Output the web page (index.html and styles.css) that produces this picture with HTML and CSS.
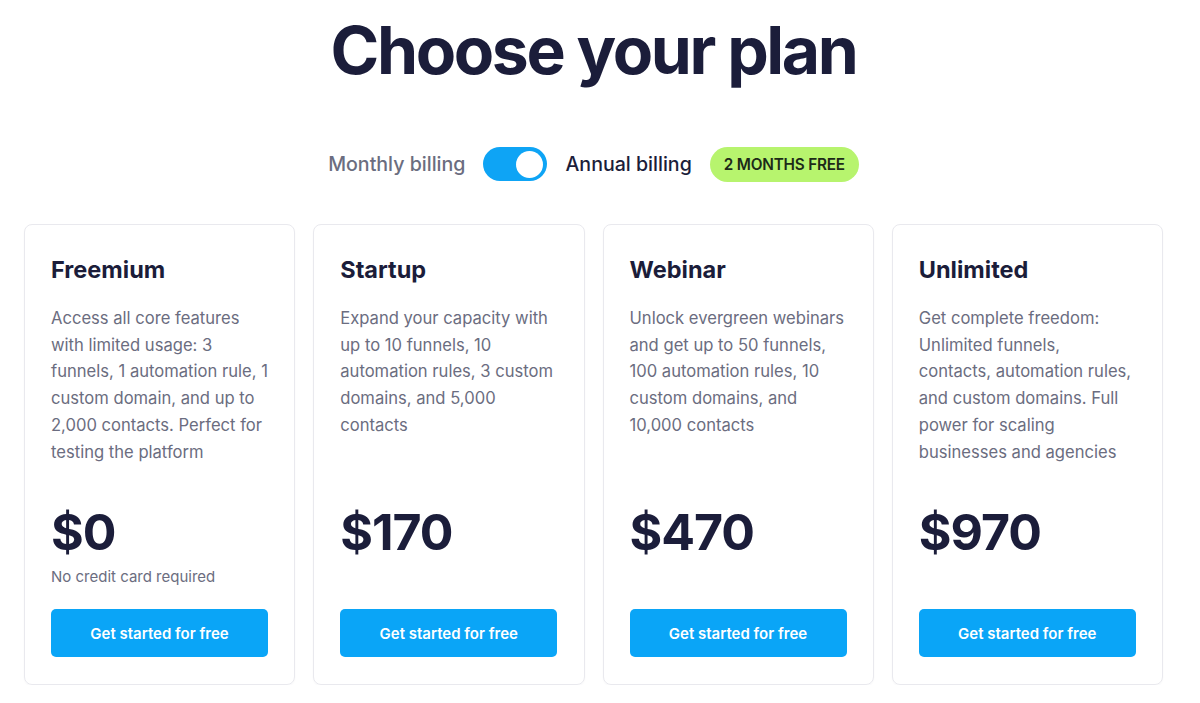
FILE: index.html
```html
<!DOCTYPE html>
<html lang="en">
<head>
<meta charset="utf-8">
<title>Choose your plan</title>
<link rel="stylesheet" href="styles.css">
</head>
<body>
<main class="pricing">
  <h1 class="title">Choose your plan</h1>
  <div class="billing">
    <span class="billing-label">Monthly billing</span>
    <span class="toggle" role="switch" aria-checked="true"><span class="knob"></span></span>
    <span class="billing-label active">Annual billing</span>
    <span class="badge">2 MONTHS FREE</span>
  </div>
  <section class="cards">
    <article class="card">
      <h2 class="plan">Freemium</h2>
      <p class="desc">Access all core features with limited usage: 3 funnels, 1 automation rule, 1 custom domain, and up to 2,000 contacts. Perfect for testing the platform</p>
      <div class="price">$0</div>
      <div class="note">No credit card required</div>
      <a class="btn" href="#">Get started for free</a>
    </article>
    <article class="card">
      <h2 class="plan">Startup</h2>
      <p class="desc">Expand your capacity with up to 10 funnels, 10 automation rules, 3 custom domains, and 5,000 contacts</p>
      <div class="price">$170</div>
      <div class="note"></div>
      <a class="btn" href="#">Get started for free</a>
    </article>
    <article class="card">
      <h2 class="plan">Webinar</h2>
      <p class="desc">Unlock evergreen webinars and get up to 50 funnels, 100 automation rules, 10 custom domains, and 10,000 contacts</p>
      <div class="price">$470</div>
      <div class="note"></div>
      <a class="btn" href="#">Get started for free</a>
    </article>
    <article class="card">
      <h2 class="plan">Unlimited</h2>
      <p class="desc">Get complete freedom: Unlimited funnels, contacts, automation rules, and custom domains. Full power for scaling businesses and agencies</p>
      <div class="price">$970</div>
      <div class="note"></div>
      <a class="btn" href="#">Get started for free</a>
    </article>
  </section>
</main>
</body>
</html>
```

FILE: styles.css
```css
* { box-sizing: border-box; }
html, body { margin: 0; padding: 0; background: #ffffff; }
body {
  font-family: "Inter", "Noto Sans", "Liberation Sans", sans-serif;
  color: #1b1d3a;
}
.pricing {
  padding: 8px 37px 0 24px;
}
.title {
  margin: 0;
  text-align: center;
  font-size: 66px;
  line-height: 84px;
  font-weight: 700;
  letter-spacing: -2.4px;
  color: #1b1d3a;
}
.billing {
  margin-top: 55px;
  display: flex;
  justify-content: center;
  align-items: center;
  gap: 18px;
  height: 34px;
}
.billing-label {
  font-size: 19.6px;
  font-weight: 500;
  color: #6b6d80;
}
.billing-label.active { color: #1b1d3a; }
.toggle {
  width: 64px;
  height: 34px;
  border-radius: 17px;
  background: #0ea4f5;
  display: flex;
  align-items: center;
  justify-content: flex-end;
  padding-right: 4px;
}
.knob {
  width: 27px;
  height: 27px;
  border-radius: 50%;
  background: #ffffff;
}
.badge {
  height: 35px;
  display: inline-flex;
  align-items: center;
  padding: 0 14px;
  border-radius: 18px;
  background: #b7f46e;
  color: #1d2a18;
  font-size: 15.3px;
  font-weight: 600;
  letter-spacing: -0.2px;
}
.cards {
  margin-top: 43px;
  display: grid;
  grid-template-columns: repeat(4, 1fr);
  gap: 18px;
}
.card {
  border: 1px solid #e9e9ee;
  border-radius: 8px;
  padding: 30px 26px 27px 26px;
  display: flex;
  flex-direction: column;
  height: 461px;
  box-shadow: 0 1px 2px rgba(20, 20, 50, 0.03);
}
.plan {
  margin: 0;
  font-size: 23.5px;
  line-height: 30px;
  font-weight: 700;
  color: #1b1d3a;
}
.desc {
  margin: 20px 0 0 0;
  font-size: 16.6px;
  line-height: 26.7px;
  color: #6b6d80;
  flex: 1;
}
.price {
  font-size: 50px;
  line-height: 60px;
  font-weight: 700;
  letter-spacing: -1px;
  color: #1b1d3a;
}
.note {
  height: 20px;
  margin-top: 5px;
  font-size: 15px;
  line-height: 20px;
  color: #6b6d80;
}
.btn {
  margin-top: 22px;
  display: flex;
  align-items: center;
  justify-content: center;
  width: 217px;
  height: 48px;
  border-radius: 5px;
  background: #0aa5f7;
  color: #ffffff;
  font-size: 15px;
  font-weight: 600;
  text-decoration: none;
}
```
